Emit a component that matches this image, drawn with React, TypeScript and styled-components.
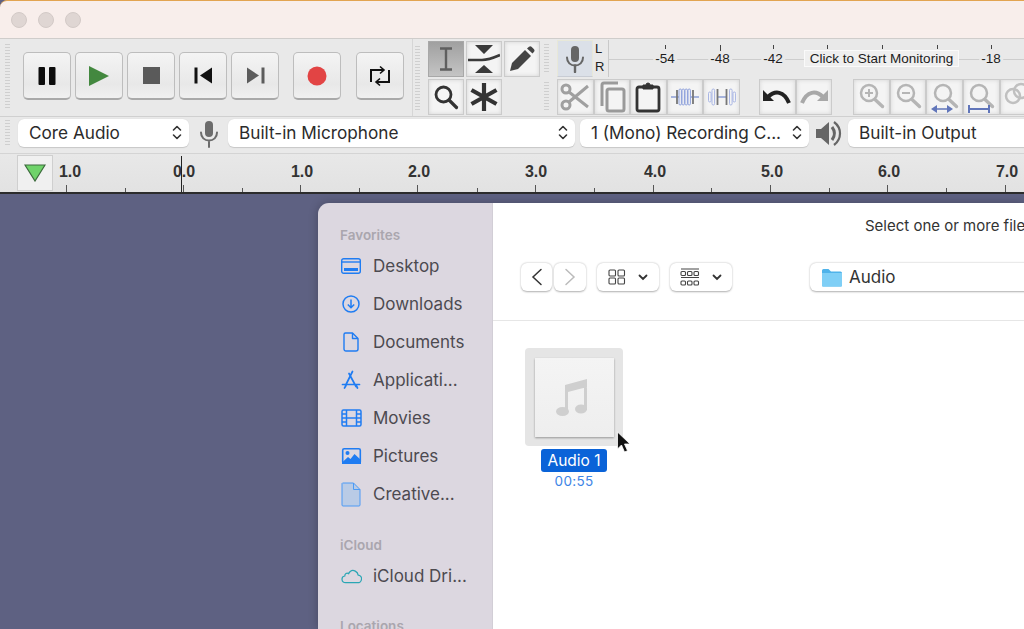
import React from 'react'
import styled, { createGlobalStyle } from 'styled-components'

const Global = createGlobalStyle`
html, body { margin: 0; padding: 0; background: #5e6182; }
body { width: 1024px; height: 629px; overflow: hidden; font-family: Inter, "Liberation Sans", sans-serif; }
`

const Page = styled.div`
  width: 1024px;
  height: 629px;
  overflow: hidden;
  display: flex;
  flex-direction: column;
  background: #5e6182;
`
const TitleBar = styled.div`
  height: 39px;
  flex: none;
  box-sizing: border-box;
  background: #f8eeeb;
  border-top: 1px solid #e2a450;
  border-top-left-radius: 7px;
  border-bottom: 1px solid #cfcdcb;
  display: flex;
  align-items: center;
  gap: 11px;
  padding-left: 11px;
`
const TrafficDot = styled.span`
  width: 16px;
  height: 16px;
  border-radius: 50%;
  background: #dfd6d3;
  border: 1px solid #d3cac7;
  box-sizing: border-box;
`
const Toolbars = styled.div`
  flex: none;
  height: 77px;
  background: #e9e9e9;
  display: flex;
  border-bottom: 1px solid #d0d0d0;
`
const Grip = styled.div<{ $h: number; $ml?: number }>`
  width: 5px;
  height: ${p => p.$h}px;
  flex: none;
  margin-left: ${p => p.$ml ?? 0}px;
  background: repeating-linear-gradient(180deg, #cfcfcf 0 1px, transparent 1px 3px);
`
const Transport = styled.div`
  width: 413px;
  flex: none;
  display: flex;
  align-items: center;
  padding: 0 0 3px 5px;
  box-sizing: border-box;
  border-right: 1px solid #d6d6d6;
`
const TransportBtn = styled.button<{ $ml?: number }>`
  width: 48px;
  height: 48px;
  flex: none;
  padding: 0;
  margin-left: ${p => p.$ml ?? 4}px;
  border: 1px solid #bdbdbd;
  border-bottom: 2px solid #a9a9a9;
  border-radius: 5px;
  background: linear-gradient(180deg, #f4f4f4, #e8e8e8 70%, #f0f0f0);
  display: flex;
  align-items: center;
  justify-content: center;
`
const ToolsWrap = styled.div`
  flex: none;
  display: flex;
  align-items: center;
  gap: 8px;
  padding-left: 2px;
`
const Tools = styled.div`
  flex: none;
  display: grid;
  grid-template-columns: 36px 36px 36px;
  grid-auto-rows: 36px;
  gap: 2px;
  align-content: center;
`
const ToolBtn = styled.div<{ $on?: boolean }>`
  box-sizing: border-box;
  display: flex;
  align-items: center;
  justify-content: center;
  border: 1px solid ${p => p.$on ? '#a8a8a8' : '#cbcbcb'};
  box-shadow: ${p => p.$on ? 'none' : 'inset 0 0 4px #d4d4d4'};
  background: ${p => p.$on ? 'linear-gradient(180deg,#a0a0a0,#c4c4c4)' : '#f4f4f4'};
`
const Right = styled.div`
  flex: 1;
  min-width: 0;
  margin-left: 3px;
  display: flex;
  flex-direction: column;
  overflow: hidden;
`
const MeterRow = styled.div`
  height: 39px;
  display: flex;
  align-items: center;
  flex: none;
`
const MicToggle = styled.div`
  width: 36px;
  height: 37px;
  flex: none;
  margin-left: 8px;
  box-sizing: border-box;
  background: #dbe0e8;
  border: 1px solid #e8e8d8;
  border-bottom-color: #c8ccd4;
  display: flex;
  align-items: center;
  justify-content: center;
`
const LR = styled.div`
  width: 13px;
  height: 37px;
  flex: none;
  margin-left: 2px;
  font: 13px/18px "Liberation Sans", sans-serif;
  color: #222;
  border-right: 1px solid #c9c9c9;
`
const Meter = styled.div`
  position: relative;
  flex: 1;
  height: 37px;
  font: 13.5px "Liberation Sans", sans-serif;
  color: #1c1c1c;
`
const MeterLine = styled.div`
  position: absolute;
  left: 0;
  right: 0;
  top: 19px;
  height: 1px;
  background: #cdcdcd;
`
const MeterTick = styled.span<{ $x: number; $tall?: boolean }>`
  position: absolute;
  left: ${p => p.$x}px;
  top: 5px;
  width: 1px;
  height: ${p => p.$tall ? 9 : 4}px;
  background: #444;
`
const MeterNum = styled.span<{ $x: number }>`
  position: absolute;
  left: ${p => p.$x}px;
  top: 11px;
  padding: 0 2px;
  transform: translateX(-50%);
  background: #e9e9e9;
`
const MonitorTag = styled.span`
  position: absolute;
  left: 195px;
  top: 10px;
  width: 155px;
  height: 17px;
  box-sizing: border-box;
  text-align: center;
  line-height: 16px;
  background: #efefef;
  border: 1px solid #fafafa;
  white-space: nowrap;
`
const EditRow = styled.div`
  height: 36px;
  margin-top: 1px;
  display: flex;
  align-items: center;
`
const EditBtn = styled(ToolBtn)<{ $ml?: number }>`
  width: 36.600px;
  height: 36px;
  flex: none;
  margin-left: ${p => p.$ml ?? 0}px;
`
const DeviceRow = styled.div`
  height: 37px;
  flex: none;
  background: #e9e9e9;
  border-bottom: 1px solid #d4d4d4;
  display: flex;
  align-items: center;
  padding: 0 0 5px 5px;
  box-sizing: border-box;
  overflow: hidden;
`
const Select = styled.div<{ $w: number; $ml?: number }>`
  width: ${p => p.$w}px;
  height: 28px;
  flex: none;
  margin-left: ${p => p.$ml ?? 0}px;
  box-sizing: border-box;
  background: #fff;
  border-radius: 6px;
  box-shadow: 0 0.5px 1px rgba(0,0,0,.15);
  display: flex;
  align-items: center;
  justify-content: space-between;
  padding: 0 6px 0 11px;
  font-size: 17.200px;
  color: #2b2b2b;
  white-space: nowrap;
`
const DeviceIcon = styled.svg<{ $ml: number; $mr: number }>`
  flex: none;
  margin: 2px ${p => p.$mr}px 0 ${p => p.$ml}px;
`
const Ruler = styled.div`
  position: relative;
  flex: none;
  height: 40px;
  box-sizing: border-box;
  background: linear-gradient(180deg, #e8e8e8, #e2e2e2);
  border-bottom: 2px solid #2c2c2c;
`
const PlayHead = styled.div`
  position: absolute;
  left: 17px;
  top: 1px;
  width: 36px;
  height: 36px;
  box-sizing: border-box;
  background: #f0f0f0;
  border: 1px solid #cfcfcf;
  display: flex;
  align-items: center;
  justify-content: center;
`
const RulerNum = styled.span<{ $x: number }>`
  position: absolute;
  left: ${p => p.$x}px;
  top: 9px;
  transform: translateX(-50%);
  font: bold 16px "Liberation Sans", sans-serif;
  color: #333;
`
const RulerTick = styled.span<{ $x: number; $major?: boolean }>`
  position: absolute;
  left: ${p => p.$x}px;
  bottom: 0;
  width: 1px;
  height: ${p => p.$major ? 7 : 4}px;
  background: #555;
`
const Cursor = styled.span`
  position: absolute;
  left: 181px;
  top: 2px;
  bottom: 0;
  width: 1px;
  background: #222;
`
const Workspace = styled.div`
  flex: 1;
  min-height: 0;
  padding: 9px 0 0 318px;
  display: flex;
`
const Dialog = styled.div`
  width: 706px;
  flex: none;
  display: flex;
  border-top-left-radius: 11px;
  overflow: hidden;
  box-shadow: 0 0 10px rgba(0,0,0,.25);
`
const Sidebar = styled.div`
  width: 175px;
  flex: none;
  background: #dcd7e0;
  box-sizing: border-box;
  padding: 24px 0 0 22px;
  border-right: 1px solid #d2ced6;
`
const SideHead = styled.div<{ $mt?: number }>`
  font-size: 13.500px;
  font-weight: 600;
  color: #aaa6ae;
  line-height: 17px;
  margin-top: ${p => p.$mt ?? 0}px;
  margin-bottom: 3px;
`
const SideItem = styled.div`
  height: 38px;
  display: flex;
  align-items: center;
  gap: 11px;
  font-size: 17px;
  color: #4c4a50;
  white-space: nowrap;
`
const SideIcon = styled.span`
  width: 22px;
  flex: none;
  display: flex;
  justify-content: center;
`
const Main = styled.div`
  flex: 1;
  min-width: 0;
  background: #fff;
  display: flex;
  flex-direction: column;
`
const Header = styled.div`
  height: 118px;
  flex: none;
  border-bottom: 1px solid #e6e6e6;
  box-sizing: border-box;
`
const Prompt = styled.div`
  padding: 14px 0 0 372px;
  font-size: 15px;
  line-height: 18px;
  color: #333;
  white-space: nowrap;
`
const Controls = styled.div`
  margin-top: 28px;
  padding-left: 28px;
  display: flex;
  align-items: center;
`
const MiniBtn = styled.div<{ $w: number; $ml?: number }>`
  width: ${p => p.$w}px;
  height: 28px;
  flex: none;
  margin-left: ${p => p.$ml ?? 0}px;
  box-sizing: border-box;
  border-radius: 6px;
  background: #fff;
  box-shadow: 0 0.5px 2px rgba(0,0,0,.32);
  display: flex;
  align-items: center;
  justify-content: center;
  gap: 12px;
`
const PathBox = styled(MiniBtn)`
  justify-content: flex-start;
  padding-left: 12px;
  gap: 7px;
  font-size: 17px;
  color: #333;
`
const Files = styled.div`
  padding: 27px 0 0 31px;
  width: 100px;
  display: flex;
  flex-direction: column;
  align-items: center;
  position: relative;
`
const Thumb = styled.div`
  width: 98px;
  height: 98px;
  flex: none;
  background: #e5e5e5;
  border-radius: 4px;
  display: flex;
  align-items: center;
  justify-content: center;
`
const Sheet = styled.div`
  width: 79px;
  height: 79px;
  padding-right: 4px;
  box-sizing: border-box;
  background: linear-gradient(180deg, #f4f4f4, #eeeeee);
  box-shadow: 0 1px 2px rgba(0,0,0,.35);
  display: flex;
  align-items: center;
  justify-content: center;
`
const FileName = styled.div`
  margin-top: 3px;
  height: 23px;
  padding: 0 6px;
  border-radius: 3px;
  background: #0a63d8;
  color: #fff;
  font-size: 15.500px;
  line-height: 23px;
  white-space: nowrap;
`
const FileMeta = styled.div`
  font-size: 13.500px;
  line-height: 18px;
  color: #3d84e6;
  letter-spacing: .3px;
`
const Pointer = styled.svg`
  position: absolute;
  left: 123px;
  top: 110px;
`

const blue = '#1f7cf2'

const sideItems: { label: string; icon: React.ReactNode }[] = [
  { label: 'Desktop', icon: <svg width="22" height="18" viewBox="0 0 22 18" fill="none" stroke={blue} strokeWidth="1.4"><rect x="1.700" y="1.700" width="18.600" height="14.600" rx="2" /><path d="M2 5h18" /><rect x="4" y="11" width="14" height="3" fill={blue} stroke="none" /></svg> },
  { label: 'Downloads', icon: <svg width="20" height="20" viewBox="0 0 20 20" fill="none" stroke={blue} strokeWidth="1.5"><circle cx="10" cy="10" r="8" /><path d="M10 5.500v8M6.800 10.500 10 13.700l3.200-3.200" /></svg> },
  { label: 'Documents', icon: <svg width="16" height="20" viewBox="0 0 16 20" fill="none" stroke={blue} strokeWidth="1.4" strokeLinejoin="round"><path d="M2.500 1h7L15 6.500V17a2 2 0 0 1-2 2H3a2 2 0 0 1-2-2V2.500A1.500 1.500 0 0 1 2.500 1Z" /><path d="M9.500 1v5.500H15" /></svg> },
  { label: 'Applicati...', icon: <svg width="20" height="20" viewBox="0 0 20 20" fill="none" stroke={blue} strokeWidth="1.7" strokeLinecap="round"><path d="M11.500 1.500 4.500 15.500M8 3.500l7 13M1.500 14.500h17M3.500 18 5 15.500M16.500 18 15 15" /></svg> },
  { label: 'Movies', icon: <svg width="21" height="18" viewBox="0 0 21 18" fill="none" stroke={blue} strokeWidth="1.5"><rect x="1" y="1" width="19" height="16" rx="1.500" /><path d="M5.500 1v16M15.500 1v16M5.500 9h10M1 5h4.500M1 9h4.500M1 13h4.500M15.500 5H20M15.500 9H20M15.500 13H20" /></svg> },
  { label: 'Pictures', icon: <svg width="21" height="18" viewBox="0 0 21 18"><rect x="1.700" y="1.700" width="17.600" height="14.600" rx="1.500" fill="none" stroke={blue} strokeWidth="1.600" /><circle cx="6.500" cy="6" r="2" fill={blue} /><path d="M1 15.500 7 10l2.500 2 4-5L20 13v4H1Z" fill={blue} /></svg> },
  { label: 'Creative...', icon: <svg width="20" height="25" viewBox="0 0 20 25"><path d="M1.500 1h11L19 7.500V23a1 1 0 0 1-1 1H2a1 1 0 0 1-1-1V1.500Z" fill="#b9cbe6" stroke="#4c9af5" strokeWidth="1" /><path d="M12.500 1v6.500H19" fill="none" stroke="#4c9af5" strokeWidth="1" /></svg> },
]

function Chevrons() {
  return (
    <svg width="12" height="17" viewBox="0 0 12 17" fill="none" stroke="#333" strokeWidth="1.600" strokeLinecap="round" strokeLinejoin="round">
      <path d="M2.500 6 6 2.500 9.500 6M2.500 11 6 14.500 9.500 11" />
    </svg>
  )
}

function Mic() {
  return (
    <svg width="20" height="28" viewBox="0 0 20 28" fill="none">
      <rect x="6" y="1" width="8" height="16" rx="4" fill="#666" />
      <path d="M2 12.500c0 5 3.500 8 8 8s8-3 8-8" stroke="#666" strokeWidth="2" strokeLinecap="round" />
      <path d="M10 20.500V27" stroke="#666" strokeWidth="2.400" strokeLinecap="round" />
    </svg>
  )
}

function Mag({ children, c = '#b5b5b5' }: { children?: React.ReactNode; c?: string }) {
  return (
    <svg width="30" height="32" viewBox="0 0 30 32" fill="none">
      <circle cx="13" cy="12" r="8" stroke={c} strokeWidth="2.500" />
      <path d="m19 18.500 7.500 7" stroke={c} strokeWidth="3.400" strokeLinecap="round" />
      {children}
    </svg>
  )
}

// trim: wave between two dark bars, silence: the reverse
function TrimIcon() {
  return (
    <svg width="28" height="22" viewBox="0 0 28 22" fill="none">
      <path d="M0 11h28" stroke="#93a4d8" strokeWidth="1.600" />
      <path d="M6 4v14M22 4v14" stroke="#777" strokeWidth="1.800" />
      {[8, 11, 14, 17].map(x => <rect key={x} x={x} y="3" width="2.400" height="16" rx="1.200" stroke="#8fa2dc" strokeWidth="1" fill="#f4f4f4" />)}
    </svg>
  )
}

function SilenceIcon() {
  return (
    <svg width="28" height="22" viewBox="0 0 28 22" fill="none">
      {[0, 3.500, 21, 24.500].map(x => <rect key={x} x={x + 0.500} y={x === 0 || x === 24.500 ? 6 : 3} width="2.600" height={x === 0 || x === 24.500 ? 10 : 16} rx="1.300" stroke="#a9b6e4" strokeWidth="1" />)}
      <path d="M9 11h10" stroke="#93a4d8" strokeWidth="1.600" />
      <path d="M9.500 3v16M18.500 3v16" stroke="#777" strokeWidth="1.800" />
    </svg>
  )
}

const meterTicks = [665, 720, 773, 827, 882, 937, 991]
const rulerLabels = [
  { x: 70, t: '1.0' }, { x: 184, t: '0.0' }, { x: 302, t: '1.0' }, { x: 419, t: '2.0' },
  { x: 536, t: '3.0' }, { x: 655, t: '4.0' }, { x: 772, t: '5.0' }, { x: 889, t: '6.0' }, { x: 1007, t: '7.0' },
]
const rulerTicks = [66, 125, 183, 242, 300, 359, 417, 477, 535, 594, 653, 711, 770, 829, 887, 946, 1005]

export default function App() {
  return (
    <Page>
      <Global />
      <TitleBar>
        <TrafficDot /><TrafficDot /><TrafficDot />
      </TitleBar>
      <Toolbars>
        <Transport>
          <Grip $h={64} />
          <TransportBtn $ml={13}>
            <svg width="18" height="20" viewBox="0 0 18 20"><rect x="0.500" y="1" width="6.500" height="18" rx="1" fill="#0c0c0c" /><rect x="11" y="1" width="6.500" height="18" rx="1" fill="#0c0c0c" /></svg>
          </TransportBtn>
          <TransportBtn>
            <svg width="22" height="22" viewBox="0 0 22 22"><path d="M1 1 21 11 1 21Z" fill="#43883f" /></svg>
          </TransportBtn>
          <TransportBtn>
            <svg width="17" height="17" viewBox="0 0 17 17"><rect width="17" height="17" fill="#5a5a5a" /></svg>
          </TransportBtn>
          <TransportBtn>
            <svg width="19" height="17" viewBox="0 0 19 17"><rect x="0.500" y="0.500" width="3" height="16" fill="#111" /><path d="M18 0.500V16.500L6 8.500Z" fill="#111" /></svg>
          </TransportBtn>
          <TransportBtn>
            <svg width="19" height="17" viewBox="0 0 19 17"><path d="M1 0.500V16.500L13 8.500Z" fill="#5c5c5c" /><rect x="15.500" y="0.500" width="3" height="16" fill="#5c5c5c" /></svg>
          </TransportBtn>
          <TransportBtn $ml={14}>
            <svg width="20" height="20" viewBox="0 0 20 20"><circle cx="10" cy="10" r="9.500" fill="#e24444" /></svg>
          </TransportBtn>
          <TransportBtn $ml={15}>
            <svg width="22" height="24" viewBox="0 0 22 24" fill="none" stroke="#111" strokeWidth="2"><path d="M2 18V6h12M20 6v12H8" /><path d="m11 2.500 4 3.500-4 3.500M11 14.500 7 18l4 3.500" strokeWidth="1.600" /></svg>
          </TransportBtn>
        </Transport>
        <ToolsWrap>
          <Grip $h={64} />
          <Tools>
            <ToolBtn $on>
              <svg width="14" height="24" viewBox="0 0 14 24" fill="none" stroke="#5f5f5f" strokeWidth="2.400"><path d="M1 1.500h12M1 22.500h12M7 1.500v21" /></svg>
            </ToolBtn>
            <ToolBtn>
              <svg width="32" height="28" viewBox="0 0 32 28"><path d="M7 0h18l-9 9ZM7 28h18l-9-8Z" fill="#3a3a3a" /><path d="M0 15h14c6 0 11-2 18-5" fill="none" stroke="#3a3a3a" strokeWidth="2.600" /></svg>
            </ToolBtn>
            <ToolBtn>
              <svg width="26" height="26" viewBox="0 0 26 26"><path d="M1 25l2-8L16 4l6 6L9 23Z" fill="#444" /><path d="M18 2.500 20 .800a2 2 0 0 1 2.500 0l2.500 2.500a2 2 0 0 1 0 2.500L23.500 7.500Z" fill="#444" /></svg>
            </ToolBtn>
            <ToolBtn>
              <svg width="26" height="26" viewBox="0 0 26 26" fill="none" stroke="#333"><circle cx="10.500" cy="10.500" r="7.500" strokeWidth="2.800" /><path d="m16 16 7.500 7.500" strokeWidth="3.200" strokeLinecap="round" /></svg>
            </ToolBtn>
            <ToolBtn>
              <svg width="28" height="28" viewBox="0 0 28 28" fill="none" stroke="#333" strokeWidth="4.200"><path d="M14 0v28M1.500 7l25 14M26.500 7l-25 14" /></svg>
            </ToolBtn>
          </Tools>
        </ToolsWrap>
        <Right>
          <MeterRow>
            <Grip $h={30} $ml={1} />
            <MicToggle><Mic /></MicToggle>
            <LR>L<br />R</LR>
            <Meter>
              <MeterLine />
              {meterTicks.map(x => <MeterTick key={x} $x={x - 609} $tall={x === 720} />)}
              <MeterNum $x={56}>-54</MeterNum>
              <MeterNum $x={111}>-48</MeterNum>
              <MeterNum $x={164}>-42</MeterNum>
              <MonitorTag>Click to Start Monitoring</MonitorTag>
              <MeterNum $x={382}>-18</MeterNum>
            </Meter>
          </MeterRow>
          <EditRow>
            <Grip $h={30} $ml={1} />
            <EditBtn $ml={8}>
              <svg width="30" height="30" viewBox="0 0 30 30" fill="none" stroke="#a0a0a0" strokeWidth="3"><circle cx="6" cy="7" r="4" /><circle cx="6" cy="23" r="4" /><path d="M9 10 28 25M9 20 28 4" /></svg>
            </EditBtn>
            <EditBtn>
              <svg width="28" height="32" viewBox="0 0 28 32" fill="none" stroke="#9a9a9a" strokeWidth="3"><rect x="9" y="8" width="17" height="22" rx="2" /><path d="M4 25V4a2 2 0 0 1 2-2h14" /></svg>
            </EditBtn>
            <EditBtn>
              <svg width="26" height="32" viewBox="0 0 26 32" fill="none" stroke="#333" strokeWidth="2.800"><rect x="2" y="6" width="22" height="24" rx="2" /><path d="M8 8V4h3a2 2 0 0 1 4 0h3v4Z" fill="#333" strokeWidth="1" /></svg>
            </EditBtn>
            <EditBtn><TrimIcon /></EditBtn>
            <EditBtn><SilenceIcon /></EditBtn>
            <EditBtn $ml={19}>
              <svg width="28" height="16" viewBox="0 0 28 16"><path d="M0 1v11h11Z" fill="#222" /><path d="M5 8c7-7 16-6 21 6" fill="none" stroke="#222" strokeWidth="4" /></svg>
            </EditBtn>
            <EditBtn>
              <svg width="28" height="16" viewBox="0 0 28 16"><path d="M28 1v11H17Z" fill="#a8a8a8" /><path d="M23 8C16 1 7 2 2 14" fill="none" stroke="#a8a8a8" strokeWidth="4" /></svg>
            </EditBtn>
            <EditBtn $ml={21}><Mag><path d="M13 8v8M9 12h8" stroke="#b5b5b5" strokeWidth="2" /></Mag></EditBtn>
            <EditBtn><Mag><path d="M9 12h8" stroke="#b5b5b5" strokeWidth="2" /></Mag></EditBtn>
            <EditBtn><Mag><path d="M3 28h18" stroke="#6176ba" strokeWidth="1.500" /><path d="M1 28l6-4v8ZM23 28l-6-4v8Z" fill="#6176ba" /></Mag></EditBtn>
            <EditBtn><Mag><path d="M3 24v8M23 24v8M3 28h20" stroke="#6176ba" strokeWidth="2" /></Mag></EditBtn>
            <EditBtn>
              <svg width="30" height="32" viewBox="0 0 30 32" fill="none" stroke="#c0c0c0" strokeWidth="2.500"><circle cx="10" cy="15" r="7" /><circle cx="18" cy="10" r="7" /></svg>
            </EditBtn>
          </EditRow>
        </Right>
      </Toolbars>
      <DeviceRow>
        <Grip $h={26} />
        <Select $w={171} $ml={8}>Core Audio<Chevrons /></Select>
        <DeviceIcon width="20" height="28" viewBox="0 0 20 28" $ml={10} $mr={9} fill="none">
          <rect x="6" y="1" width="8" height="16" rx="4" fill="#6c6c6c" />
          <path d="M2 12.500c0 5 3.500 8 8 8s8-3 8-8M10 20.500V27" stroke="#6c6c6c" strokeWidth="2" strokeLinecap="round" />
        </DeviceIcon>
        <Select $w={347}>Built-in Microphone<Chevrons /></Select>
        <Select $w={229} $ml={5}>1 (Mono) Recording C...<Chevrons /></Select>
        <DeviceIcon width="27" height="27" viewBox="0 0 27 27" $ml={6} $mr={6}>
          <path d="M1 9h5l8-7v23l-8-7H1Z" fill="#666" />
          <path d="M17 7c3 4 3 9 0 13" fill="none" stroke="#666" strokeWidth="3" />
          <path d="M19 2c8 6 8 17 0 23" fill="none" stroke="#666" strokeWidth="2.200" />
        </DeviceIcon>
        <Select $w={200}>Built-in Output</Select>
      </DeviceRow>
      <Ruler>
        <PlayHead>
          <svg width="22" height="18" viewBox="0 0 22 18"><path d="M1 1h20L11 17Z" fill="#6fd36a" stroke="#3c6a3c" strokeWidth="1.200" /></svg>
        </PlayHead>
        {rulerLabels.map(l => <RulerNum key={l.x} $x={l.x}>{l.t}</RulerNum>)}
        {rulerTicks.map((x, i) => <RulerTick key={x} $x={x} $major={i % 2 === 0} />)}
        <Cursor />
      </Ruler>
      <Workspace>
        <Dialog>
          <Sidebar>
            <SideHead>Favorites</SideHead>
            {sideItems.map(item => (
              <SideItem key={item.label}>
                <SideIcon>{item.icon}</SideIcon>
                {item.label}
              </SideItem>
            ))}
            <SideHead $mt={24}>iCloud</SideHead>
            <SideItem>
              <SideIcon>
                <svg width="23" height="16" viewBox="0 0 23 16" fill="none" stroke="#2aa6b4" strokeWidth="1.300"><path d="M6 15h12a4 4 0 0 0 1-8c-.5-3.500-5-6-8-4-1 .7-1.500 1.500-2 2.500-2-1-4 0-4 2.500-4 .5-4 7 1 7Z" /></svg>
              </SideIcon>
              iCloud Dri...
            </SideItem>
            <SideHead $mt={23}>Locations</SideHead>
          </Sidebar>
          <Main>
            <Header>
              <Prompt>Select one or more files</Prompt>
              <Controls>
                <MiniBtn $w={31}>
                  <svg width="12" height="18" viewBox="0 0 12 18" fill="none" stroke="#333" strokeWidth="1.500" strokeLinecap="round"><path d="M10 1.500 2 9l8 7.500" /></svg>
                </MiniBtn>
                <MiniBtn $w={32} $ml={2}>
                  <svg width="12" height="18" viewBox="0 0 12 18" fill="none" stroke="#bbb" strokeWidth="1.500" strokeLinecap="round"><path d="m2 1.500 8 7.500-8 7.500" /></svg>
                </MiniBtn>
                <MiniBtn $w={62} $ml={11}>
                  <svg width="18" height="16" viewBox="0 0 18 16" fill="none" stroke="#444" strokeWidth="1.100"><rect x="1" y="1" width="6.500" height="6" rx="1" /><rect x="10" y="1" width="6.500" height="6" rx="1" /><rect x="1" y="9" width="6.500" height="6" rx="1" /><rect x="10" y="9" width="6.500" height="6" rx="1" /></svg>
                  <svg width="10" height="7" viewBox="0 0 10 7" fill="none" stroke="#333" strokeWidth="1.800" strokeLinecap="round"><path d="m1.500 1.500 3.500 3.500 3.500-3.500" /></svg>
                </MiniBtn>
                <MiniBtn $w={62} $ml={11}>
                  <svg width="20" height="19" viewBox="0 0 20 19" fill="none" stroke="#444" strokeWidth="1.100"><path d="M1 1h18M1 9.500h18" /><rect x="1" y="3.500" width="4.500" height="4" rx="1" /><rect x="7.500" y="3.500" width="4.500" height="4" rx="1" /><rect x="14" y="3.500" width="4.500" height="4" rx="1" /><rect x="1" y="13" width="4.500" height="4" rx="1" /><rect x="7.500" y="13" width="4.500" height="4" rx="1" /><rect x="14" y="13" width="4.500" height="4" rx="1" /></svg>
                  <svg width="10" height="7" viewBox="0 0 10 7" fill="none" stroke="#333" strokeWidth="1.800" strokeLinecap="round"><path d="m1.500 1.500 3.500 3.500 3.500-3.500" /></svg>
                </MiniBtn>
                <PathBox $w={260} $ml={78}>
                  <svg width="20" height="19" viewBox="0 0 20 19"><path d="M0 2.500A1.500 1.500 0 0 1 1.500 1h5L9 3.500h9.500A1.500 1.500 0 0 1 20 5v12.500a1 1 0 0 1-1 1H1a1 1 0 0 1-1-1Z" fill="#4fb3ea" /><path d="M0 5h20v12.500a1 1 0 0 1-1 1H1a1 1 0 0 1-1-1Z" fill="#7fcff6" /></svg>
                  Audio
                </PathBox>
              </Controls>
            </Header>
            <Files>
              <Thumb>
                <Sheet>
                  <svg width="34" height="39" viewBox="0 0 34 39" fill="#cfcfcf">
                    <path d="M10 7 32 1v8l-19 5v20h-3ZM29 8h3v24h-3Z" />
                    <ellipse cx="7.500" cy="33.500" rx="6.500" ry="4.500" />
                    <ellipse cx="26" cy="31" rx="6" ry="4.500" />
                  </svg>
                </Sheet>
              </Thumb>
              <FileName>Audio 1</FileName>
              <FileMeta>00:55</FileMeta>
              <Pointer width="16" height="24" viewBox="0 0 16 24">
                <path d="M1.500 1v17l4-4 3 7 3-1.300-3-6.700h5.500Z" fill="#111" stroke="#fff" strokeWidth="0.800" />
              </Pointer>
            </Files>
          </Main>
        </Dialog>
      </Workspace>
    </Page>
  )
}
